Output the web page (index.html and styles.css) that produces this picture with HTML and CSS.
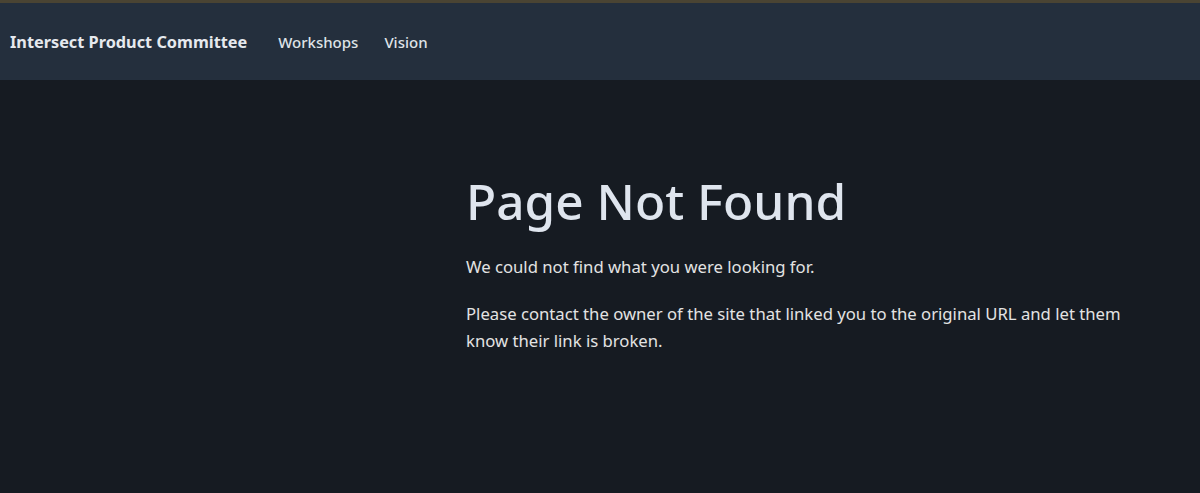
FILE: index.html
```html
<!DOCTYPE html>
<html lang="en">
<head>
<meta charset="utf-8">
<title>Page Not Found | Intersect Product Committee</title>
<link rel="stylesheet" href="styles.css">
</head>
<body>
<div class="topline"></div>
<nav class="navbar">
  <a class="brand" href="#">Intersect Product Committee</a>
  <a class="nav-link" href="#">Workshops</a>
  <a class="nav-link" href="#">Vision</a>
</nav>
<main class="main">
  <div class="content">
    <h1 class="title">Page Not Found</h1>
    <p class="text">We could not find what you were looking for.</p>
    <p class="text">Please contact the owner of the site that linked you to the original URL and let them know their link is broken.</p>
  </div>
</main>
</body>
</html>
```
FILE: styles.css
```css
html, body {
  margin: 0;
  padding: 0;
  height: 100%;
}
body {
  background: #161b22;
  font-family: "Noto Sans", "Open Sans", sans-serif;
  color: #e3e3e3;
  overflow: hidden;
}
.topline {
  height: 3px;
  background: #4a4433;
}
.navbar {
  height: 77px;
  background: #242f3d;
  display: flex;
  align-items: center;
  padding: 0 10px;
  box-sizing: border-box;
}
.brand {
  color: #e6e9ee;
  font-weight: 700;
  font-size: 16.3px;
  text-decoration: none;
  margin-right: 31px;
}
.nav-link {
  color: #dfe3e8;
  font-size: 15px;
  font-weight: 500;
  text-decoration: none;
  margin-right: 26px;
}
.main {
  padding-top: 92px;
  padding-left: 466px;
}
.content {
  width: 690px;
}
.title {
  margin: 0 0 22px;
  font-size: 49.5px;
  font-weight: 500;
  line-height: 1.2;
  color: #dfe5ee;
}
.text {
  margin: 0 0 20px;
  font-size: 16.7px;
  line-height: 27px;
  color: #e3e3e3;
}
```
